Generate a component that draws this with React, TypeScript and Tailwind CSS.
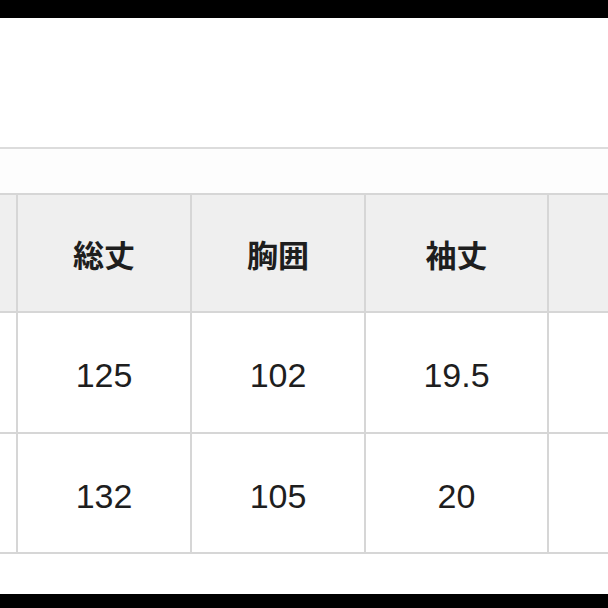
/** Size chart — partial table view cropped between two black bars. */

const headers = ['', '総丈', '胸囲', '袖丈', '']
const rows = [
  ['', '125', '102', '19.5', ''],
  ['', '132', '105', '20', ''],
]

export default function App() {
  return (
    <div
      className="w-[608px] h-[608px] flex flex-col bg-white text-[#1e1e1e] overflow-hidden"
      style={{ fontFamily: '"Noto Sans CJK JP", "Noto Sans", sans-serif' }}
    >
      {/* top bar */}
      <div className="h-[18px] bg-black shrink-0" />

      {/* empty header area */}
      <div className="h-[129px] shrink-0 bg-white" />
      <div className="h-[2px] bg-[#dcdcdc] shrink-0" />
      <div className="h-[44px] shrink-0 bg-[#fdfdfd]" />

      {/* table */}
      <div className="grid grid-cols-[16px_172px_172px_181px_1fr] gap-[2px] bg-[#d6d6d6] py-[2px] shrink-0">
        {headers.map((h, i) => (
          <div
            key={`h${i}`}
            className="h-[116px] bg-[#efefef] flex items-center justify-center text-[31px] font-bold leading-none"
          >
            {h}
          </div>
        ))}
        {rows.map((r, ri) =>
          r.map((c, ci) => (
            <div
              key={`${ri}-${ci}`}
              className={`${ri === 0 ? 'h-[119px]' : 'h-[118px]'} bg-white flex items-center justify-center pt-[5px] text-[34px] leading-none font-['Liberation_Sans',sans-serif]`}
            >
              {c}
            </div>
          ))
        )}
      </div>

      <div className="flex-1 bg-white" />

      {/* bottom bar */}
      <div className="h-[14px] bg-black shrink-0" />
    </div>
  )
}
